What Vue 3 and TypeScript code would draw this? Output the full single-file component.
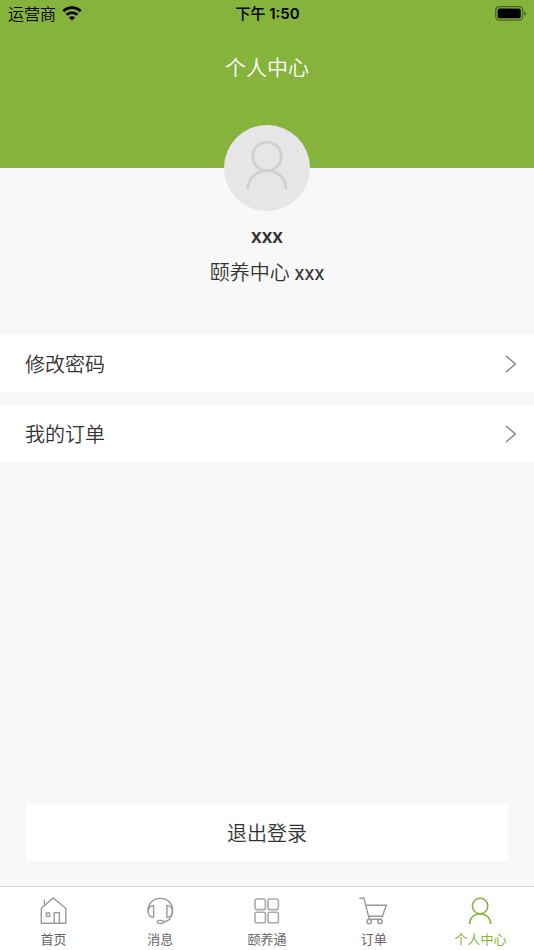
<script setup lang="ts">
import { ref } from 'vue'

type TabKey = 'home' | 'message' | 'hub' | 'order' | 'profile'

interface Tab {
  key: TabKey
  label: string
}

const tabs: Tab[] = [
  { key: 'home', label: '首页' },
  { key: 'message', label: '消息' },
  { key: 'hub', label: '颐养通' },
  { key: 'order', label: '订单' },
  { key: 'profile', label: '个人中心' },
]

const menu: string[] = ['修改密码', '我的订单']
const active = ref<TabKey>('profile')
</script>

<template>
  <div class="page">
    <header class="header">
      <div class="status">
        <div class="carrier">
          <span>运营商</span>
          <svg class="wifi" viewBox="0 0 20 15" aria-hidden="true">
            <path d="M1.4 5.2A12.2 12.2 0 0 1 18.6 5.2" />
            <path d="M4.6 8.8A7.7 7.7 0 0 1 15.4 8.8" />
            <path class="dot" d="M10 14.6L6.9 11.6A4.4 4.4 0 0 1 13.1 11.6Z" />
          </svg>
        </div>
        <span class="time"><span class="period">下午</span> 1:50</span>
        <div class="power">
          <svg class="battery" viewBox="0 0 32 15" aria-hidden="true">
            <rect class="shell" x="0.7" y="0.7" width="27" height="13.4" rx="3.6" />
            <rect x="2.6" y="2.6" width="23.2" height="9.6" rx="1.8" />
            <path class="cap" d="M29.2 5.2Q31 5.8 31 7.4T29.2 9.6Z" />
          </svg>
        </div>
      </div>
      <h1 class="title">个人中心</h1>
    </header>

    <main class="main">
      <section class="profile">
        <div class="avatar">
          <svg viewBox="0 0 86 86" aria-hidden="true">
            <circle cx="43" cy="31.4" r="14.2" />
            <path d="M24 64.2C24 53 32.6 45.6 43 45.6S62 53 62 64.2" />
          </svg>
        </div>
        <p class="name">xxx</p>
        <p class="center-name">颐养中心 <span class="latin">xxx</span></p>
      </section>

      <nav class="menu">
        <a v-for="item in menu" :key="item" class="row" href="#">
          <span>{{ item }}</span>
          <svg class="chevron" viewBox="0 0 12 18" aria-hidden="true">
            <path d="M1 1L10.4 9L1 17" />
          </svg>
        </a>
      </nav>

      <button class="logout" type="button">退出登录</button>
    </main>

    <nav class="tabbar">
      <button
        v-for="tab in tabs"
        :key="tab.key"
        type="button"
        :class="['tab', tab.key, { active: active === tab.key }]"
        @click="active = tab.key"
      >
        <svg class="icon" viewBox="0 0 28 28" aria-hidden="true">
          <g v-if="tab.key === 'home'">
            <path d="M2.3 26.3V11.3L14.3 1L26.8 11.3V26.3ZM5.4 8.6V2.8" />
            <path d="M7.4 16H10.6V19.4H7.4ZM15.2 26.3V15.6H20.4V26.3" />
          </g>
          <g v-else-if="tab.key === 'message'">
            <path d="M2.2 15.2C1 7 7 1.4 14.4 1.4S27.6 7 26.4 15.2C25.6 21 22 24.5 17.4 25.1" />
            <path d="M7.6 8.6V20.2C4.6 20.6 2.2 18 2.2 14.4S4.6 8.2 7.6 8.6Z" />
            <path d="M20.9 8.6V20.2C23.9 20.6 26.4 18 26.4 14.4S23.9 8.2 20.9 8.6Z" />
            <rect x="11.4" y="23.4" width="6" height="3" rx="1.5" />
          </g>
          <g v-else-if="tab.key === 'hub'">
            <rect x="2" y="2" width="10.4" height="10.6" rx="1.8" />
            <rect x="15" y="2" width="10.4" height="10.6" rx="1.8" />
            <rect x="2" y="15.2" width="10.4" height="10.6" rx="1.8" />
            <rect x="15" y="15.2" width="10.4" height="10.6" rx="1.8" />
          </g>
          <g v-else-if="tab.key === 'order'">
            <path d="M-0.6 1.2H3.9L9.2 21.8" />
            <path d="M5.6 8.3H26.3L22.4 19.2H8.6M9.2 22.2H21.8" />
            <circle cx="9.2" cy="24.5" r="2.2" />
            <circle cx="20" cy="24.5" r="2.2" />
          </g>
          <g v-else>
            <circle cx="13.1" cy="9" r="7.7" />
            <path d="M2.6 27C2.6 20.8 7.2 16.7 13.1 16.7S23.6 20.8 23.6 27" />
          </g>
        </svg>
        <span>{{ tab.label }}</span>
      </button>
    </nav>
  </div>
</template>

<style>
body {
  margin: 0;
}
</style>

<style scoped>
.page {
  display: flex;
  flex-direction: column;
  min-height: 100vh;
  background: #f8f8f8;
  color: #333;
  font-family: Roboto, "Noto Sans CJK SC", sans-serif;
  font-size: 20px;
  font-weight: 350;
}

svg {
  fill: none;
  stroke: currentColor;
}

.header {
  height: 168px;
  background: #86b33c;
}

.status {
  display: grid;
  grid-template-columns: 1fr auto 1fr;
  align-items: center;
  height: 28px;
  padding: 0 7px 0 8px;
  color: #000;
  font-family: Inter, "Noto Sans CJK SC", sans-serif;
  font-size: 16px;
  line-height: 28px;
}

.carrier {
  display: flex;
  align-items: center;
  gap: 6px;
}

.wifi {
  width: 20px;
  height: 15px;
  margin-bottom: 2px;
  stroke-width: 2.9;
}

.wifi .dot {
  fill: currentColor;
  stroke: none;
}

.time {
  font-size: 15px;
  font-weight: 600;
}

.period {
  font-weight: 500;
}

.power {
  display: flex;
  justify-content: flex-end;
}

.battery {
  width: 32px;
  height: 15px;
  margin-bottom: 2px;
  fill: currentColor;
  stroke: none;
}

.battery .shell {
  fill: none;
  stroke: #48651d;
  stroke-width: 1.2;
}

.battery .cap {
  fill: #48651d;
}

.title {
  margin: 0;
  padding-top: 25px;
  color: #fff;
  font-size: 21px;
  font-weight: 350;
  line-height: 30px;
  text-align: center;
}

.main {
  display: flex;
  flex: 1;
  flex-direction: column;
}

.profile {
  display: flex;
  flex-direction: column;
  align-items: center;
  padding-bottom: 46px;
}

.avatar {
  width: 86px;
  height: 86px;
  margin-top: -43px;
  border-radius: 50%;
  background: #e6e6e6;
  color: #d0d0d0;
}

.avatar svg {
  display: block;
  stroke-width: 2.8;
}

.name,
.center-name {
  margin: 0;
  line-height: 32px;
}

.name {
  margin-top: 9px;
  font-family: "Noto Sans", sans-serif;
  font-size: 19px;
  font-weight: 600;
}

.center-name {
  margin-top: 5px;
}

.latin {
  font-weight: 400;
}

.menu {
  display: flex;
  flex-direction: column;
  gap: 13px;
}

.row {
  display: flex;
  align-items: center;
  justify-content: space-between;
  height: 57px;
  padding: 0 17px 0 25px;
  background: #fff;
  color: inherit;
  text-decoration: none;
}

.chevron {
  width: 12px;
  height: 18px;
  color: #808080;
  stroke-width: 1.4;
}

.logout {
  height: 57px;
  margin: auto 26px 25px;
  padding: 0;
  border: 0;
  background: #fff;
  color: inherit;
  font: inherit;
}

.tabbar {
  display: flex;
  height: 64px;
  box-sizing: border-box;
  border-top: 1px solid #d8d8d8;
  background: #fff;
}

.tab {
  display: flex;
  flex: 1 1 0;
  flex-direction: column;
  align-items: center;
  gap: 5px;
  min-width: 0;
  padding: 10px 0 0;
  border: 0;
  background: none;
  color: #666;
  font: inherit;
  font-size: 13px;
  font-weight: 400;
  line-height: 20px;
}

.icon {
  width: 28px;
  height: 28px;
  flex: none;
  overflow: visible;
  color: #999;
  stroke-width: 1.4;
}

.hub .icon {
  color: #aaa;
  stroke-width: 1.6;
}

.tab.active,
.active .icon {
  color: #86b33c;
}

.active .icon {
  stroke-width: 1.6;
}
</style>
